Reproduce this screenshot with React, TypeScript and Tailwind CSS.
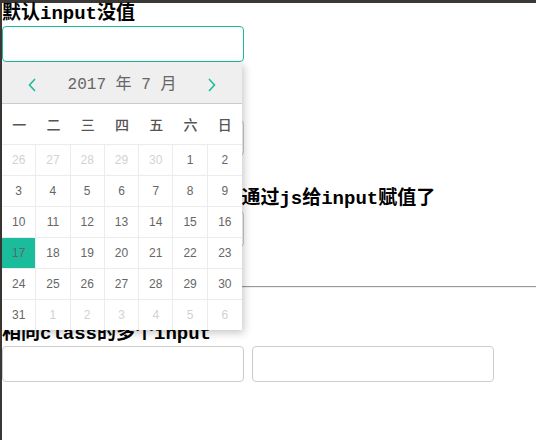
import React from 'react';

const prevDays = [26, 27, 28, 29, 30];
const nextDays = [1, 2, 3, 4, 5, 6];

function Chevron({ dir }: { dir: 'left' | 'right' }) {
  return (
    <svg width="8" height="14" viewBox="0 0 8 14" className="block">
      <polyline
        points={dir === 'left' ? '7,1 1.5,7 7,13' : '1,1 6.5,7 1,13'}
        fill="none"
        stroke="#1abc9c"
        strokeWidth="1.6"
      />
    </svg>
  );
}

function Calendar() {
  const cells: { day: number; muted: boolean }[] = [
    ...prevDays.map((d) => ({ day: d, muted: true })),
    ...Array.from({ length: 31 }, (_, i) => ({ day: i + 1, muted: false })),
    ...nextDays.map((d) => ({ day: d, muted: true })),
  ];

  return (
    <div className="absolute left-0 top-full z-10 w-[240px] bg-white font-normal shadow-[2px_3px_8px_rgba(0,0,0,0.22)]">
      {/* header */}
      <div className="flex h-[42px] items-center justify-between border-b border-[#cccccc] bg-[#efefef] px-[26px] pt-[4px]">
        <Chevron dir="left" />
        <span className="text-[16px] leading-none text-[#666] font-['Liberation_Mono','Noto_Sans_CJK_SC',monospace]">
          2017 年 7 月
        </span>
        <Chevron dir="right" />
      </div>

      {/* weekdays */}
      <div className="grid h-[40px] grid-cols-7 items-center text-center text-[14px] font-medium text-[#555] font-['Noto_Sans_CJK_SC',sans-serif]">
        {['一', '二', '三', '四', '五', '六', '日'].map((w) => (
          <span key={w}>{w}</span>
        ))}
      </div>

      {/* days */}
      <div className="grid grid-cols-7 text-[12px] font-['Liberation_Sans',sans-serif]">
        {cells.map((c, i) => (
          <div
            key={i}
            className={
              'flex h-[31px] items-center justify-center border-t border-[#ececec] pt-px ' +
              ((i + 1) % 7 === 0 ? '' : 'border-r ') +
              (!c.muted && c.day === 17
                ? 'bg-[#1abc9c] text-[#666]'
                : c.muted
                ? 'text-[#d2d2d2]'
                : 'text-[#666]')
            }
          >
            {c.day}
          </div>
        ))}
      </div>
    </div>
  );
}

export default function App() {
  return (
    <div className="min-h-screen border-l-2 border-t-[3px] border-[#3b3734] bg-white">
      <div className="text-[19px] font-bold leading-[23px] text-black font-['Liberation_Mono','Noto_Sans_CJK_SC',monospace]">
        <div>默认input没值</div>
        <div className="relative w-[242px]">
          <input className="block h-9 w-[242px] rounded border border-[#1abc9c] px-2 outline-none" />
          <Calendar />
        </div>

        <div className="mt-[35px]">默认input有值</div>
        <input className="block h-9 w-[242px] rounded border border-[#cccccc] px-2 outline-none" />

        <div className="mt-[32px]">这个 input会在页面加载后通过js给input赋值了</div>
        <input className="block h-9 w-[242px] rounded border border-[#cccccc] px-2 outline-none" />

        <hr className="mt-[39px] border-b border-t border-b-[#eeeeee] border-t-[#9a9a9a]" />

        <div className="mt-[35px]">相同class的多个input</div>
        <div className="flex gap-2">
          <input className="block h-9 w-[242px] rounded border border-[#cccccc] px-2 outline-none" />
          <input className="block h-9 w-[242px] rounded border border-[#cccccc] px-2 outline-none" />
        </div>
      </div>
    </div>
  );
}
